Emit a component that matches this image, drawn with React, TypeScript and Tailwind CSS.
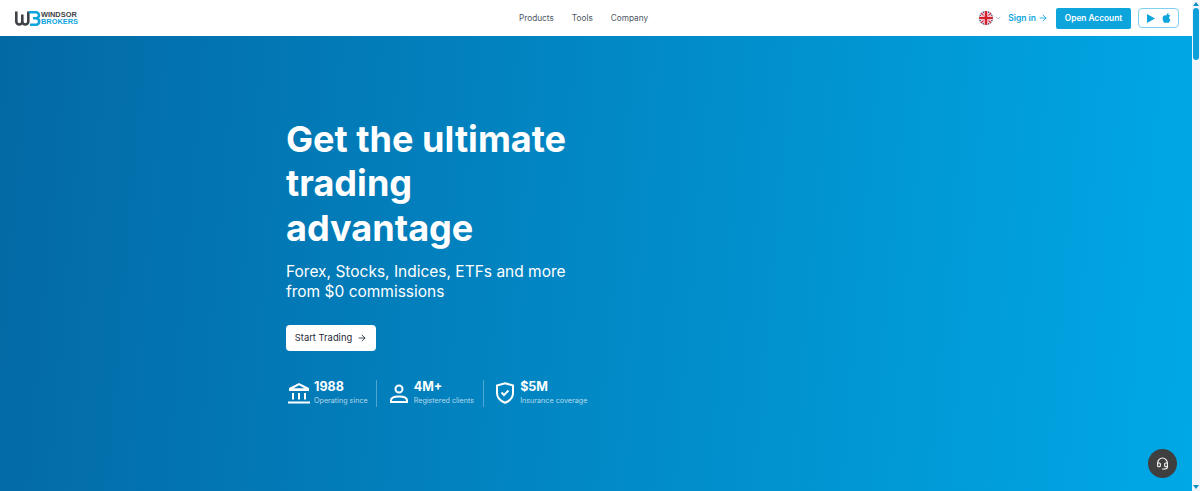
import { ArrowRight, ChevronDown, Headset } from 'lucide-react';

function Logo() {
  return (
    <div className="flex items-center">
      <svg width="26" height="15" viewBox="0 0 26 15" fill="none" strokeWidth="2.6">
        <path d="M1.3 0.5V10.5a3 3 0 0 0 6 0V3.5V10.5a3 3 0 0 0 6 0V0.5" stroke="#3f4347" />
        <path d="M14 1.3H21a3 3 0 0 1 0 6h-3M21 7.3a3 3 0 0 1 0 6.4H15" stroke="#0ea5dd" />
      </svg>
      <div className="flex flex-col font-['Liberation_Sans',sans-serif] text-[7.4px] leading-[7.5px] font-bold">
        <span className="text-[#3f4347]">WINDSOR</span>
        <span className="text-[#0ea5dd]">BROKERS</span>
      </div>
    </div>
  );
}

function Flag() {
  return (
    <svg width="14" height="14" viewBox="0 0 26 26">
      <defs>
        <clipPath id="flag-clip">
          <circle cx="13" cy="13" r="13" />
        </clipPath>
      </defs>
      <g clipPath="url(#flag-clip)">
        <rect width="26" height="26" fill="#25356f" />
        <path d="M0 0L26 26M26 0L0 26" stroke="#fff" strokeWidth="6" />
        <path d="M0 0L26 26M26 0L0 26" stroke="#d3202f" strokeWidth="2.5" />
        <path d="M13 0V26M0 13H26" stroke="#fff" strokeWidth="8" />
        <path d="M13 0V26M0 13H26" stroke="#d3202f" strokeWidth="5" />
      </g>
    </svg>
  );
}

function BankIcon() {
  return (
    <svg width="22" height="21" viewBox="0 0 22 21" fill="white">
      <path d="M11 0L21 5V8H1V5ZM11 2.2L5.5 5.2H16.5Z" fillRule="evenodd" />
      <rect x="4" y="10" width="2" height="6.5" />
      <rect x="10" y="10" width="2" height="6.5" />
      <rect x="16" y="10" width="2" height="6.5" />
      <rect x="0" y="18.5" width="22" height="2" />
    </svg>
  );
}

function PersonIcon() {
  return (
    <svg width="18" height="19" viewBox="0 0 18 19" fill="none" stroke="white" strokeWidth="2">
      <circle cx="9" cy="5" r="3.5" />
      <path d="M1 18v-1.5C1 14 4 12.5 9 12.5s8 1.5 8 4V18Z" />
    </svg>
  );
}

function ShieldIcon() {
  return (
    <svg width="18" height="22" viewBox="0 0 18 22" fill="none" stroke="white" strokeWidth="2">
      <path d="M9 1.2L17 3.5V11c0 4.5-3.5 8-8 9.8C4.5 19 1 15.5 1 11V3.5Z" />
      <path d="M5.5 10.5L8 13l4.5-4.5" />
    </svg>
  );
}

function Stat({ icon, value, label, iconClass }: { icon: React.ReactNode; value: string; label: string; iconClass: string }) {
  return (
    <div className="flex items-center">
      <div className={iconClass}>{icon}</div>
      <div className="flex flex-col">
        <span className="text-[12.5px] leading-[16px] font-bold text-white">{value}</span>
        <span className="text-[7.2px] leading-[12px] text-white/70">{label}</span>
      </div>
    </div>
  );
}

export default function App() {
  return (
    <div className="flex h-[491px] w-[1200px] overflow-hidden bg-white font-['Inter',sans-serif]">
      <div className="flex w-[1192px] flex-col">
        {/* Header */}
        <header className="relative flex h-[36px] shrink-0 items-center justify-between bg-white pr-[13px] pl-[15px]">
          <Logo />
          <nav className="absolute top-[12px] left-[519px] flex gap-[18px] text-[8.25px] leading-[13px] text-[#4b5563]">
            <span>Products</span>
            <span>Tools</span>
            <span>Company</span>
          </nav>
          <div className="flex items-center">
            <Flag />
            <ChevronDown className="ml-[1px] h-[8px] w-[8px] text-[#9ca3af]" />
            <span className="ml-[6px] text-[8.5px] font-semibold text-[#0ea5dd]">Sign in</span>
            <ArrowRight className="ml-[2px] h-[10px] w-[10px] text-[#0ea5dd]" />
            <button className="ml-[8px] flex h-[21px] w-[75px] items-center justify-center rounded-[2px] bg-[#0ea5dd] text-[8.3px] font-semibold text-white">
              Open Account
            </button>
            <div className="ml-[7px] flex h-[20px] w-[41px] items-center justify-center gap-[7px] rounded-[4px] border border-[#7fd0ee]">
              <svg width="8" height="9" viewBox="0 0 8 9" fill="#0ea5dd">
                <path d="M0 0L8 4.5L0 9Z" />
              </svg>
              <svg width="9" height="10" viewBox="0 0 16 18" fill="#0ea5dd">
                <path d="M8 4.5C6 3.5 1.5 3.8 1 9c-.3 4 2.5 9 4.5 9 1 0 1.5-.7 2.5-.7s1.5.7 2.5.7c2 0 4-4 4.5-6-3-1-3-6 0-7.500-1.500-2-5-2-7-.5ZM8 4c0-2 1.500-4 4-4 0 2-1.500 4-4 4Z" />
              </svg>
            </div>
          </div>
        </header>

        {/* Hero */}
        <section className="relative flex-1 bg-[linear-gradient(95deg,#0369a5_0%,#00a8e6_100%)] pt-[81px] pl-[286px]">
          <h1 className="w-[300px] text-[36.1px] leading-[44.3px] font-bold text-white">Get the ultimate trading advantage</h1>
          <p className="mt-[12.5px] w-[300px] text-[15.5px] leading-[20px] text-white">
            Forex, Stocks, Indices, ETFs and more from $0 commissions
          </p>
          <button className="mt-[23px] flex h-[26px] w-[90px] items-center justify-center gap-[5px] rounded-[4px] bg-white text-[9.4px] text-[#1f2937]">
            Start Trading
            <ArrowRight className="h-[10px] w-[10px]" />
          </button>
          <div className="mt-[28px] flex items-center">
            <Stat icon={<BankIcon />} value="1988" label="Operating since" iconClass="mr-[4px] ml-[2px]" />
            <div className="mx-[8.5px] h-[27px] w-px bg-white/30" />
            <Stat icon={<PersonIcon />} value="4M+" label="Registered clients" iconClass="mr-[6px] ml-[4px]" />
            <div className="mx-[8.5px] h-[27px] w-px bg-white/30" />
            <Stat icon={<ShieldIcon />} value="$5M" label="Insurance coverage" iconClass="mr-[6px] ml-[4px]" />
          </div>
          <button className="absolute top-[413px] left-[1148px] flex h-[29px] w-[29px] items-center justify-center rounded-full bg-[#3f3f3f] text-white">
            <Headset className="h-[13px] w-[13px]" />
          </button>
        </section>
      </div>

      {/* Scrollbar */}
      <div className="flex w-[8px] flex-col items-center justify-between bg-[#f4f5fa] py-[2px]">
        <div className="flex flex-col items-center">
          <div className="h-0 w-0 border-x-[3px] border-b-[4px] border-x-transparent border-b-[#0e8fc6]" />
          <div className="mt-[2px] h-[52px] w-[6px] rounded-full bg-[#0e9fd8]" />
        </div>
        <div className="h-0 w-0 border-x-[3px] border-t-[4px] border-x-transparent border-t-[#0e8fc6]" />
      </div>
    </div>
  );
}
